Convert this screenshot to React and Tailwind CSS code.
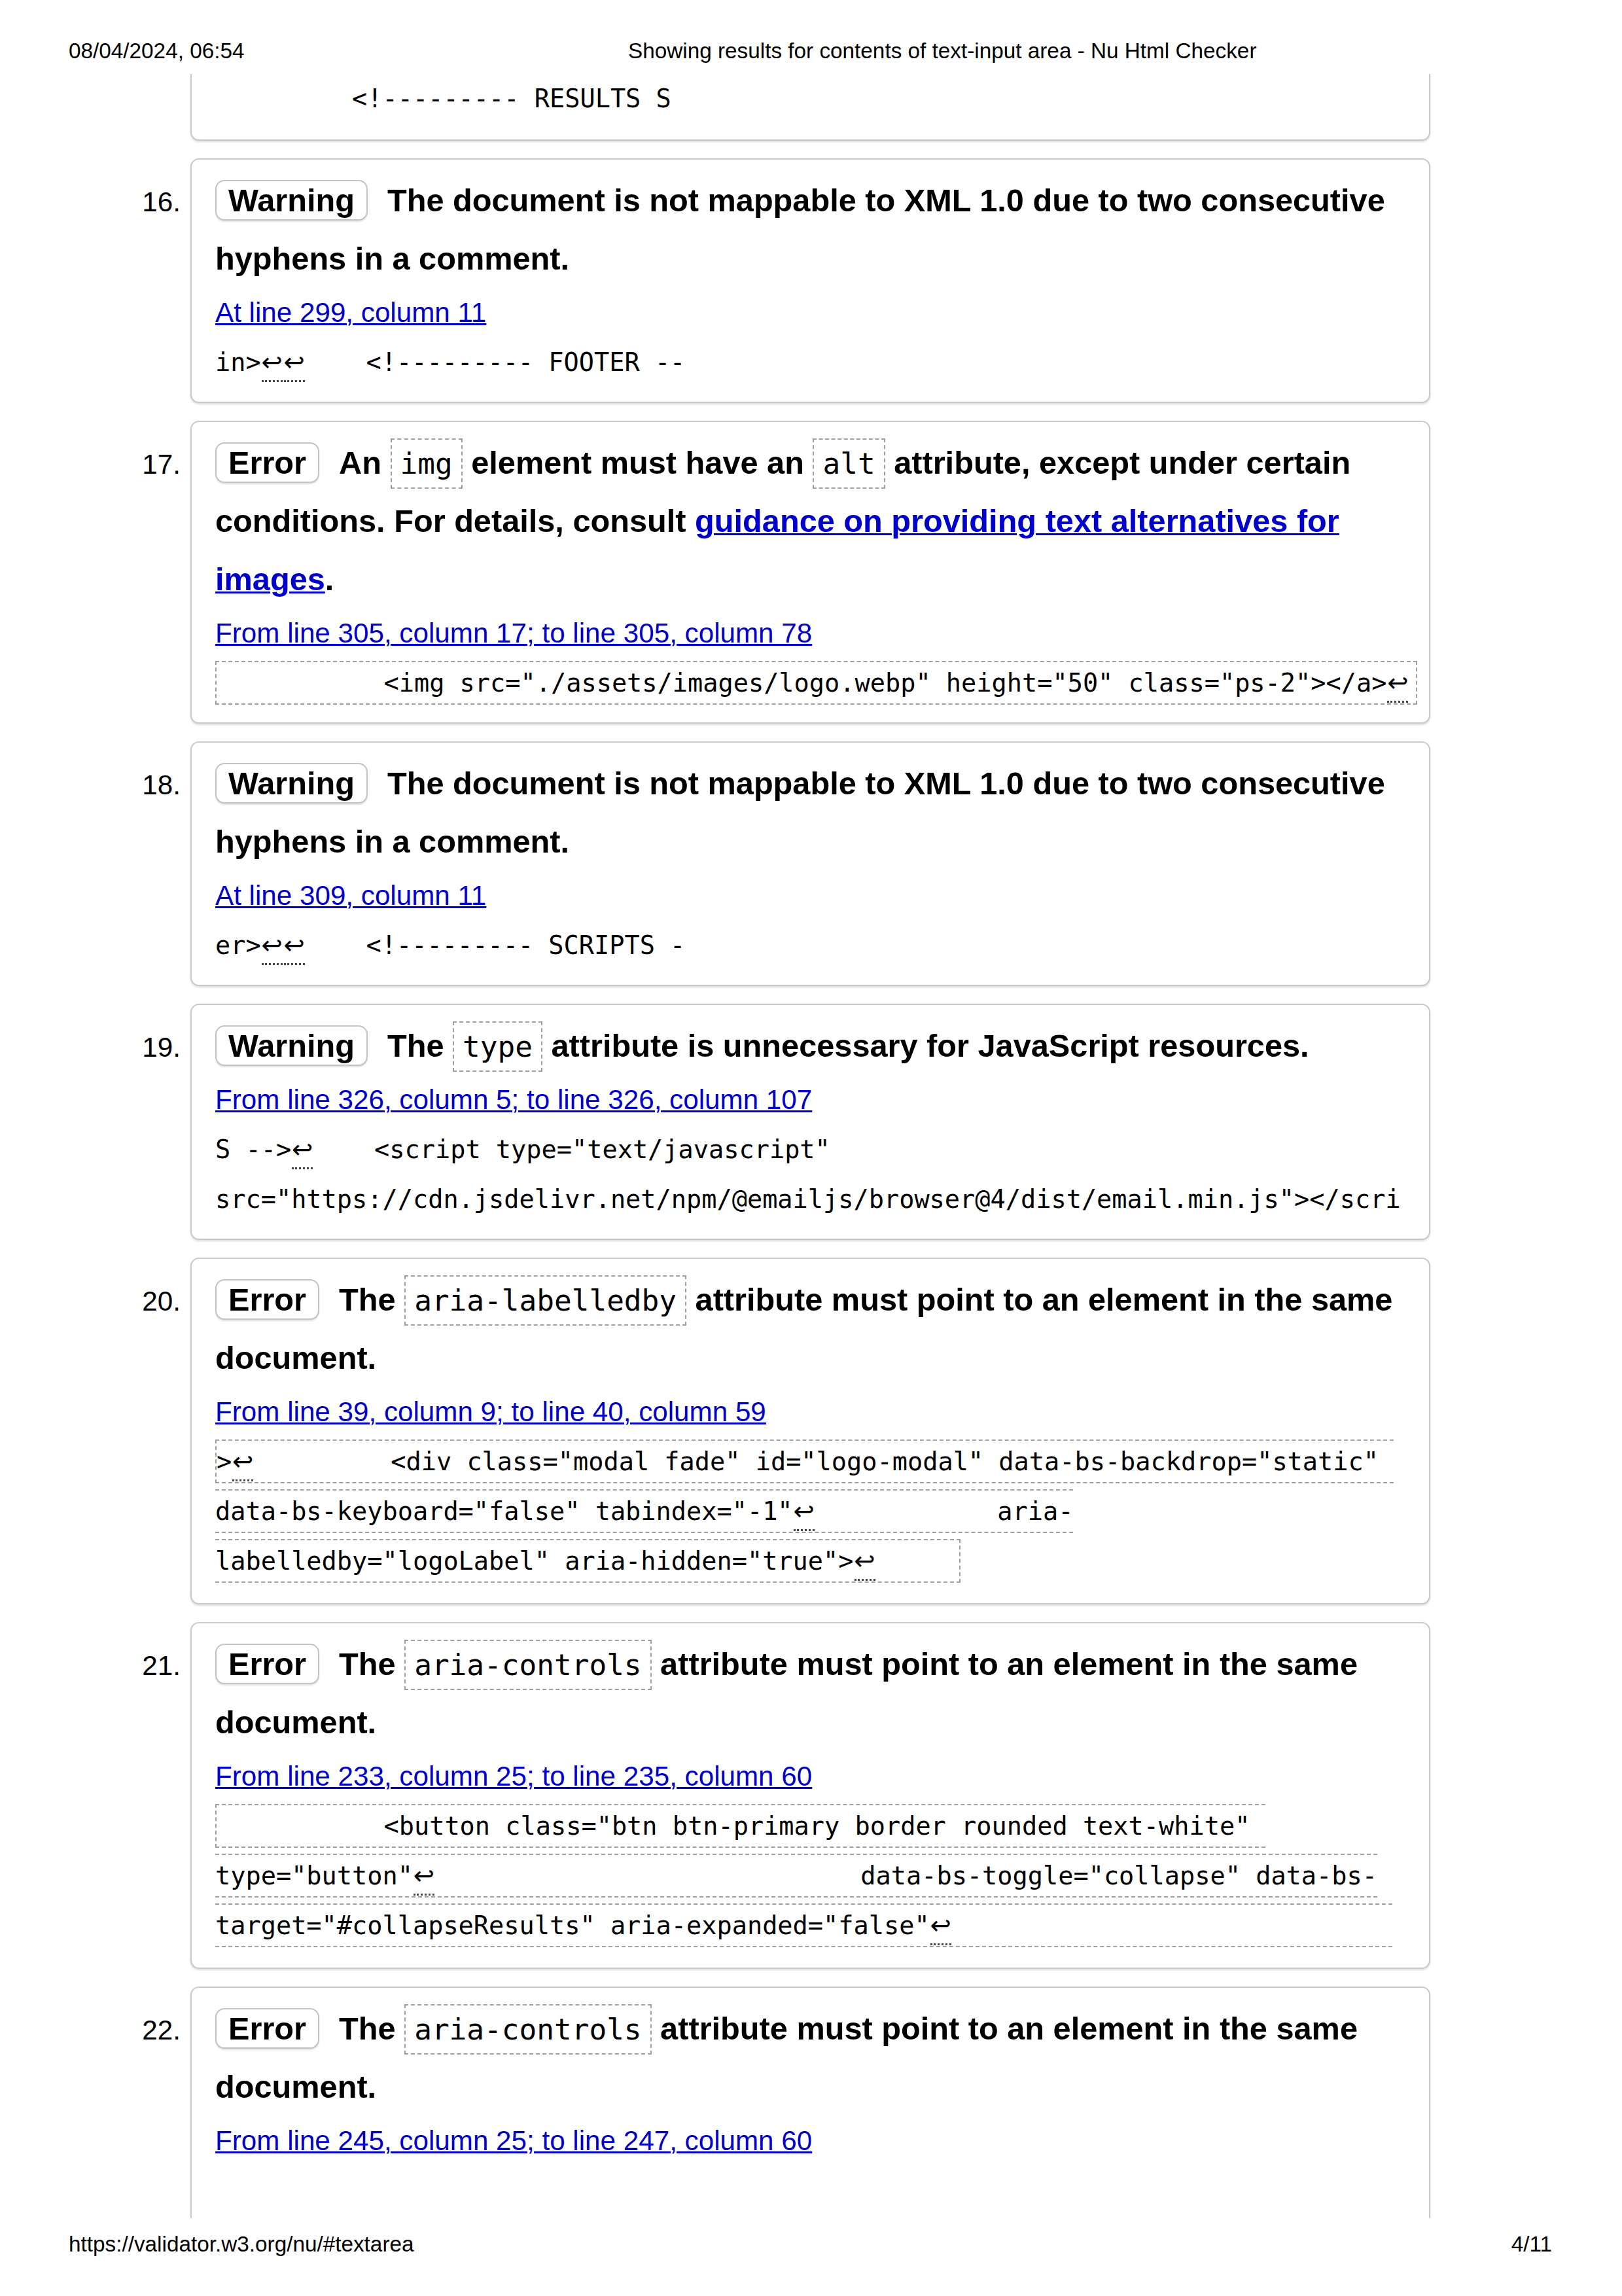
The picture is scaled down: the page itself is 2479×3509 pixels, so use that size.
import React from 'react';

const MONO = "font-['DejaVu_Sans_Mono',monospace]";

// line-break marker shown by the checker
const Lf = () => (
  <span className="relative inline-block w-[34px] text-center font-['DejaVu_Sans',sans-serif]">
    ↩
    <span className="absolute left-[1px] right-[1px] bottom-[8px] border-b-[3px] border-dotted border-[#444]" />
  </span>
);

const Badge = ({ children }) => (
  <span className="inline-block mr-[30px] px-[18px] leading-[58px] border-2 border-[#c4c4c4] rounded-[14px] bg-white shadow-[0_2px_2px_rgba(0,0,0,0.12)]">
    {children}
  </span>
);

const Code = ({ children }) => (
  <code className={`${MONO} font-normal text-[44.4px] leading-none px-[13px] py-[11px] border-2 border-dashed border-[#a0a0a0]`}>
    {children}
  </code>
);

const Mark = ({ l, r, children }) => (
  <span
    className={`border-y-2 border-dashed border-[#a0a0a0] py-[9px] ${l ? 'border-l-2' : ''} ${r ? 'border-r-2 pr-[11px]' : ''}`}
  >
    {children}
  </span>
);

const Row = ({ n, box = '', children }) => (
  <div className="flex items-baseline">
    <div className="w-[276px] shrink-0 text-right text-[42.2px]">{n}</div>
    <div
      className={`ml-[15px] w-[1895px] shrink-0 border-2 border-[#cacaca] bg-white pl-[36px] pr-[34px] shadow-[0_2px_3px_rgba(0,0,0,0.14)] ${box}`}
    >
      {children}
    </div>
  </div>
);

const Title = ({ children }) => <p className="font-bold text-[48.7px] leading-[89px]">{children}</p>;

const Where = ({ children }) => (
  <p className="text-[42.2px] leading-[76px]">
    <a className="text-[#0000cc] underline decoration-[3px]">{children}</a>
  </p>
);

const Extract = ({ children }) => (
  <div className={`${MONO} -mr-[16px] text-[38.6px] leading-[76px] whitespace-pre overflow-hidden`}>{children}</div>
);

const App = () => {
  return (
    <div className="w-[2479px] h-[3509px] overflow-hidden bg-white text-black font-['Liberation_Sans',Arial,sans-serif]">
      {/* print header */}
      <div className="h-[113px] pt-[58px] pl-[105px] flex text-[33.3px] leading-[40px]">
        <div className="w-[855px] shrink-0">08/04/2024, 06:54</div>
        <div>Showing results for contents of text-input area - Nu Html Checker</div>
      </div>

      <div className="h-[3277px] overflow-hidden flex flex-col gap-[27px]">
        {/* 15 continued */}
        <Row box="border-t-0 rounded-b-[13px] pb-[24px]">
          <Extract>
            <div>{'         <!--------- RESULTS S'}</div>
          </Extract>
        </Row>

        <Row n="16." box="rounded-[13px] pt-[18px] pb-[22px]">
          <Title>
            <Badge>Warning</Badge>
            The document is not mappable to XML 1.0 due to two consecutive hyphens in a comment.
          </Title>
          <Where>At line 299, column 11</Where>
          <Extract>
            <div>
              {'in>'}
              <Lf />
              <Lf />
              {'    <!--------- FOOTER --'}
            </div>
          </Extract>
        </Row>

        <Row n="17." box="rounded-[13px] pt-[18px] pb-[22px]">
          <Title>
            <Badge>Error</Badge>
            An <Code>img</Code> element must have an <Code>alt</Code> attribute, except under certain conditions. For
            details, consult{' '}
            <a className="text-[#0000cc] underline decoration-[3px]">guidance on providing text alternatives for images</a>.
          </Title>
          <Where>From line 305, column 17; to line 305, column 78</Where>
          <Extract>
            <div>
              <Mark l r>
                {'           <img src="./assets/images/logo.webp" height="50" class="ps-2"></a>'}
                <Lf />
              </Mark>
            </div>
          </Extract>
        </Row>

        <Row n="18." box="rounded-[13px] pt-[18px] pb-[22px]">
          <Title>
            <Badge>Warning</Badge>
            The document is not mappable to XML 1.0 due to two consecutive hyphens in a comment.
          </Title>
          <Where>At line 309, column 11</Where>
          <Extract>
            <div>
              {'er>'}
              <Lf />
              <Lf />
              {'    <!--------- SCRIPTS -'}
            </div>
          </Extract>
        </Row>

        <Row n="19." box="rounded-[13px] pt-[18px] pb-[22px]">
          <Title>
            <Badge>Warning</Badge>
            The <Code>type</Code> attribute is unnecessary for JavaScript resources.
          </Title>
          <Where>From line 326, column 5; to line 326, column 107</Where>
          <Extract>
            <div>
              {'S -->'}
              <Lf />
              {'    <script type="text/javascript"'}
            </div>
            <div>{'src="https://cdn.jsdelivr.net/npm/@emailjs/browser@4/dist/email.min.js"></scri'}</div>
          </Extract>
        </Row>

        <Row n="20." box="rounded-[13px] pt-[18px] pb-[26px]">
          <Title>
            <Badge>Error</Badge>
            The <Code>aria-labelledby</Code> attribute must point to an element in the same document.
          </Title>
          <Where>From line 39, column 9; to line 40, column 59</Where>
          <Extract>
            <div>
              <Mark l>
                {'>'}
                <Lf />
                {'         <div class="modal fade" id="logo-modal" data-bs-backdrop="static" '}
              </Mark>
            </div>
            <div>
              <Mark>
                {'data-bs-keyboard="false" tabindex="-1"'}
                <Lf />
                {'            aria-'}
              </Mark>
            </div>
            <div>
              <Mark r>
                {'labelledby="logoLabel" aria-hidden="true">'}
                <Lf />
                {'     '}
              </Mark>
            </div>
          </Extract>
        </Row>

        <Row n="21." box="rounded-[13px] pt-[18px] pb-[26px]">
          <Title>
            <Badge>Error</Badge>
            The <Code>aria-controls</Code> attribute must point to an element in the same document.
          </Title>
          <Where>From line 233, column 25; to line 235, column 60</Where>
          <Extract>
            <div>
              <Mark l>{'           <button class="btn btn-primary border rounded text-white" '}</Mark>
            </div>
            <div>
              <Mark>
                {'type="button"'}
                <Lf />
                {'                            data-bs-toggle="collapse" data-bs-'}
              </Mark>
            </div>
            <div>
              <Mark>
                {'target="#collapseResults" aria-expanded="false"'}
                <Lf />
                {'                             '}
              </Mark>
            </div>
          </Extract>
        </Row>

        <Row n="22." box="border-b-0 rounded-t-[13px] pt-[18px] h-[420px]">
          <Title>
            <Badge>Error</Badge>
            The <Code>aria-controls</Code> attribute must point to an element in the same document.
          </Title>
          <Where>From line 245, column 25; to line 247, column 60</Where>
        </Row>
      </div>

      {/* print footer */}
      <div className="mt-[20px] pl-[105px] pr-[107px] flex justify-between text-[33.3px] leading-[40px]">
        <div>https://validator.w3.org/nu/#textarea</div>
        <div>4/11</div>
      </div>
    </div>
  );
};

export default App;
